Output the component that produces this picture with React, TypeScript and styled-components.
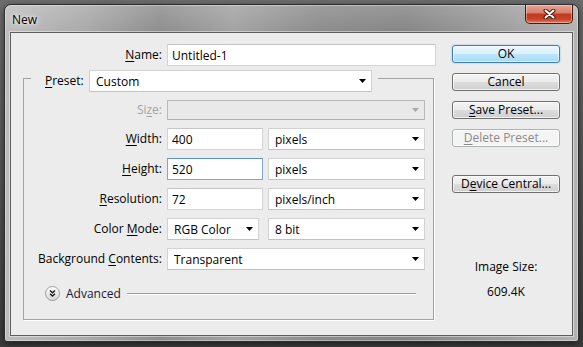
import React from 'react';
import styled, { createGlobalStyle, css } from 'styled-components';

const GlobalStyle = createGlobalStyle`
  html, body {
    margin: 0;
    padding: 0;
  }
  body {
    width: 583px;
    height: 347px;
    overflow: hidden;
    background: linear-gradient(#6c6c6c, #3c3c3c);
    font-family: "Open Sans", "Noto Sans", sans-serif;
    font-size: 12px;
    color: #000;
  }
`;

const Desktop = styled.div`
  padding: 4px 4px 0 4px;
`;

const Window = styled.div`
  width: 575px;
  height: 338px;
  box-sizing: border-box;
  display: flex;
  flex-direction: column;
  padding: 0 5px 5px;
  border: 1px solid #2e2e2e;
  border-radius: 7px 7px 3px 3px;
  background:
    linear-gradient(180deg, rgba(255, 255, 255, 0.16), rgba(255, 255, 255, 0) 28px),
    linear-gradient(90deg, #bdbdbd 0%, #a9a9a9 14%, #8d8d8d 27%, #a2a2a2 40%, #8b8b8b 55%, #858585 70%, #9c9c9c 86%, #b3b3b3 100%);
  box-shadow: inset 0 0 0 1px rgba(255, 255, 255, 0.35), 0 2px 6px rgba(0, 0, 0, 0.5);
`;

const TitleBar = styled.div`
  height: 27px;
  flex: none;
  display: flex;
  justify-content: space-between;
  align-items: flex-start;
`;

const Title = styled.div`
  padding: 7px 0 0 2px;
  line-height: 15px;
  font-size: 12px;
  text-shadow: 0 0 6px #fff, 0 0 3px rgba(255, 255, 255, 0.9);
`;

const CloseButton = styled.div`
  width: 48px;
  height: 19px;
  box-sizing: border-box;
  display: flex;
  align-items: center;
  justify-content: center;
  border: 1px solid #4a1a12;
  border-top: none;
  border-radius: 0 0 5px 5px;
  background: linear-gradient(#e7a597 0%, #d9806f 42%, #c2391f 52%, #c84428 78%, #e07a60 100%);
  box-shadow: inset 0 0 0 1px rgba(255, 255, 255, 0.35);
`;

const Client = styled.div`
  flex: 1;
  display: flex;
  border: 1px solid #5e5e5e;
  background: #ececec;
  box-shadow: 0 0 0 1px rgba(255, 255, 255, 0.45);
`;

const FormColumn = styled.div`
  flex: none;
  width: 422px;
  box-sizing: border-box;
  padding: 11px 0 0 12px;
`;

const NameRow = styled.div`
  display: grid;
  grid-template-columns: 139px 269px;
  column-gap: 5px;
  align-items: center;
`;

const Label = styled.label<{ $disabled?: boolean }>`
  text-align: right;
  white-space: nowrap;
  line-height: 16px;
  color: ${(p) => (p.$disabled ? '#a3a3a3' : '#000')};
`;

const Key = styled.span`
  text-decoration: underline;
  text-underline-offset: 2px;
`;

const GroupBox = styled.div`
  width: 411px;
  box-sizing: border-box;
  margin-top: 12px;
  padding: 0 17px 18px 0;
  display: flex;
  flex-direction: column;
  border: 1px solid #a3a3a3;
  box-shadow: 1px 1px 0 #fff;
`;

const GroupHeader = styled.div`
  align-self: flex-start;
  display: flex;
  align-items: center;
  margin: -9px 0 0 7px;
  padding: 0 6px 0 14px;
  background: #ececec;
`;

const HeaderLabel = styled(Label)`
  width: 39px;
  margin-right: 5px;
  text-align: left;
`;

const Fields = styled.div`
  margin-top: 8px;
  display: grid;
  grid-template-columns: 138px 96px 157px;
  column-gap: 5px;
  row-gap: 8px;
  align-items: center;
`;

const fieldText = css`
  font-family: "Open Sans", "Noto Sans", sans-serif;
  font-size: 12px;
  color: #000;
`;

const TextBox = styled.input<{ $focused?: boolean }>`
  ${fieldText};
  height: 22px;
  width: 100%;
  box-sizing: border-box;
  margin: 0;
  padding: 0 4px;
  background: #fff;
  outline: none;
  border: 1px solid ${(p) => (p.$focused ? '#7fa6d4' : '#d4d4d4')};
  border-top-color: ${(p) => (p.$focused ? '#5f8fc8' : '#c6c6c6')};
`;

const Dropdown = styled.div<{ $disabled?: boolean; $span?: boolean; $width?: number; $height?: number }>`
  ${fieldText};
  height: ${(p) => p.$height ?? 22}px;
  width: ${(p) => (p.$width ? `${p.$width}px` : 'auto')};
  justify-self: ${(p) => (p.$width ? 'start' : 'stretch')};
  grid-column: ${(p) => (p.$span ? '2 / 4' : 'auto')};
  box-sizing: border-box;
  display: flex;
  align-items: center;
  justify-content: space-between;
  padding: 0 5px 0 6px;
  background: ${(p) => (p.$disabled ? '#e9e9e9' : '#fff')};
  border: 1px solid ${(p) => (p.$disabled ? '#b9b9b9' : '#d2d2d2')};
  border-bottom-color: ${(p) => (p.$disabled ? '#b0b0b0' : '#c2c2c2')};
`;

const AdvancedRow = styled.div`
  margin-top: 16px;
  height: 15px;
  padding-left: 21px;
  display: flex;
  align-items: center;
`;

const AdvancedText = styled.span`
  margin-left: 6px;
  line-height: 15px;
  color: #14203a;
`;

const Rule = styled.div`
  flex: 1;
  height: 1px;
  margin-left: 6px;
  background: #a0a0a0;
  box-shadow: 0 1px 0 #fff;
`;

const ButtonColumn = styled.div`
  flex: none;
  width: 108px;
  margin-left: 19px;
  padding-top: 12px;
  display: flex;
  flex-direction: column;
  gap: 10px;
`;

const Button = styled.div<{ $primary?: boolean; $disabled?: boolean; $spaced?: boolean }>`
  height: 18px;
  box-sizing: border-box;
  margin-top: ${(p) => (p.$spaced ? 18 : 0)}px;
  border: 1px solid #707070;
  border-radius: 3px;
  background: linear-gradient(#f3f3f3 0%, #ebebeb 50%, #dddddd 50%, #cfcfcf 100%);
  box-shadow: inset 0 0 0 1px rgba(255, 255, 255, 0.7);
  line-height: 16px;
  text-align: center;
  white-space: nowrap;
  color: #000;

  ${(p) =>
    p.$primary &&
    css`
      border-color: #3c7fb1;
      background: linear-gradient(#eaf6fd 0%, #d9f0fc 50%, #bee6fd 50%, #a7d9f5 100%);
      box-shadow: inset 0 0 0 1px rgba(255, 255, 255, 0.6), 0 0 2px rgba(60, 160, 230, 0.6);
    `}

  ${(p) =>
    p.$disabled &&
    css`
      border-color: #adb2b5;
      background: #f4f4f4;
      color: #8a8a8a;
    `}
`;

const ImageSize = styled.div`
  margin-top: 56px;
  text-align: center;
  line-height: 16px;
`;

const ImageSizeValue = styled.div`
  margin-top: 9px;
`;

const Arrow = ({ disabled }: { disabled?: boolean }) => (
  <svg width="7" height="4" viewBox="0 0 7 4">
    <path d="M0 0 H7 L3.5 4 Z" fill={disabled ? '#a8a8a8' : '#000'} />
  </svg>
);

const CloseGlyph = () => (
  <svg width="13" height="10" viewBox="0 0 13 10">
    <path d="M2.5 1.5 L10.5 8.5 M10.5 1.5 L2.5 8.5" stroke="#3b1810" strokeWidth="4" strokeLinecap="round" />
    <path d="M2.5 1.5 L10.5 8.5 M10.5 1.5 L2.5 8.5" stroke="#fff" strokeWidth="2" strokeLinecap="round" />
  </svg>
);

const ExpandIcon = () => (
  <svg width="15" height="15" viewBox="0 0 15 15">
    <defs>
      <linearGradient id="adv" x1="0" y1="0" x2="0" y2="1">
        <stop offset="0" stopColor="#ffffff" />
        <stop offset="1" stopColor="#d6d6d6" />
      </linearGradient>
    </defs>
    <circle cx="7.5" cy="7.5" r="7" fill="url(#adv)" stroke="#9c9c9c" />
    <path d="M5 4.5 L7.5 6.8 L10 4.5 M5 7.8 L7.5 10.1 L10 7.8" fill="none" stroke="#1a1a1a" strokeWidth="1.4" />
  </svg>
);

const Select = ({
  value,
  disabled,
  span,
  width,
  height,
}: {
  value?: string;
  disabled?: boolean;
  span?: boolean;
  width?: number;
  height?: number;
}) => (
  <Dropdown $disabled={disabled} $span={span} $width={width} $height={height}>
    <span>{value}</span>
    <Arrow disabled={disabled} />
  </Dropdown>
);

const App = () => {
  return (
    <>
      <GlobalStyle />
      <Desktop>
        <Window>
          <TitleBar>
            <Title>New</Title>
            <CloseButton>
              <CloseGlyph />
            </CloseButton>
          </TitleBar>
          <Client>
            <FormColumn>
              <NameRow>
                <Label>
                  <Key>N</Key>ame:
                </Label>
                <TextBox defaultValue="Untitled-1" readOnly />
              </NameRow>
              <GroupBox>
                <GroupHeader>
                  <HeaderLabel>
                    <Key>P</Key>reset:
                  </HeaderLabel>
                  <Select value="Custom" width={283} />
                </GroupHeader>
                <Fields>
                  <Label $disabled>
                    Si<Key>z</Key>e:
                  </Label>
                  <Select disabled span height={20} />

                  <Label>
                    <Key>W</Key>idth:
                  </Label>
                  <TextBox defaultValue="400" readOnly />
                  <Select value="pixels" />

                  <Label>
                    <Key>H</Key>eight:
                  </Label>
                  <TextBox defaultValue="520" readOnly $focused />
                  <Select value="pixels" />

                  <Label>
                    <Key>R</Key>esolution:
                  </Label>
                  <TextBox defaultValue="72" readOnly />
                  <Select value="pixels/inch" />

                  <Label>
                    Color <Key>M</Key>ode:
                  </Label>
                  <Select value="RGB Color" width={92} />
                  <Select value="8 bit" />

                  <Label>
                    Background <Key>C</Key>ontents:
                  </Label>
                  <Select value="Transparent" span />
                </Fields>
                <AdvancedRow>
                  <ExpandIcon />
                  <AdvancedText>Advanced</AdvancedText>
                  <Rule />
                </AdvancedRow>
              </GroupBox>
            </FormColumn>
            <ButtonColumn>
              <Button $primary>OK</Button>
              <Button>Cancel</Button>
              <Button>
                <Key>S</Key>ave Preset...
              </Button>
              <Button $disabled>
                <Key>D</Key>elete Preset...
              </Button>
              <Button $spaced>
                D<Key>e</Key>vice Central...
              </Button>
              <ImageSize>
                Image Size:
                <ImageSizeValue>609.4K</ImageSizeValue>
              </ImageSize>
            </ButtonColumn>
          </Client>
        </Window>
      </Desktop>
    </>
  );
};

export default App;
